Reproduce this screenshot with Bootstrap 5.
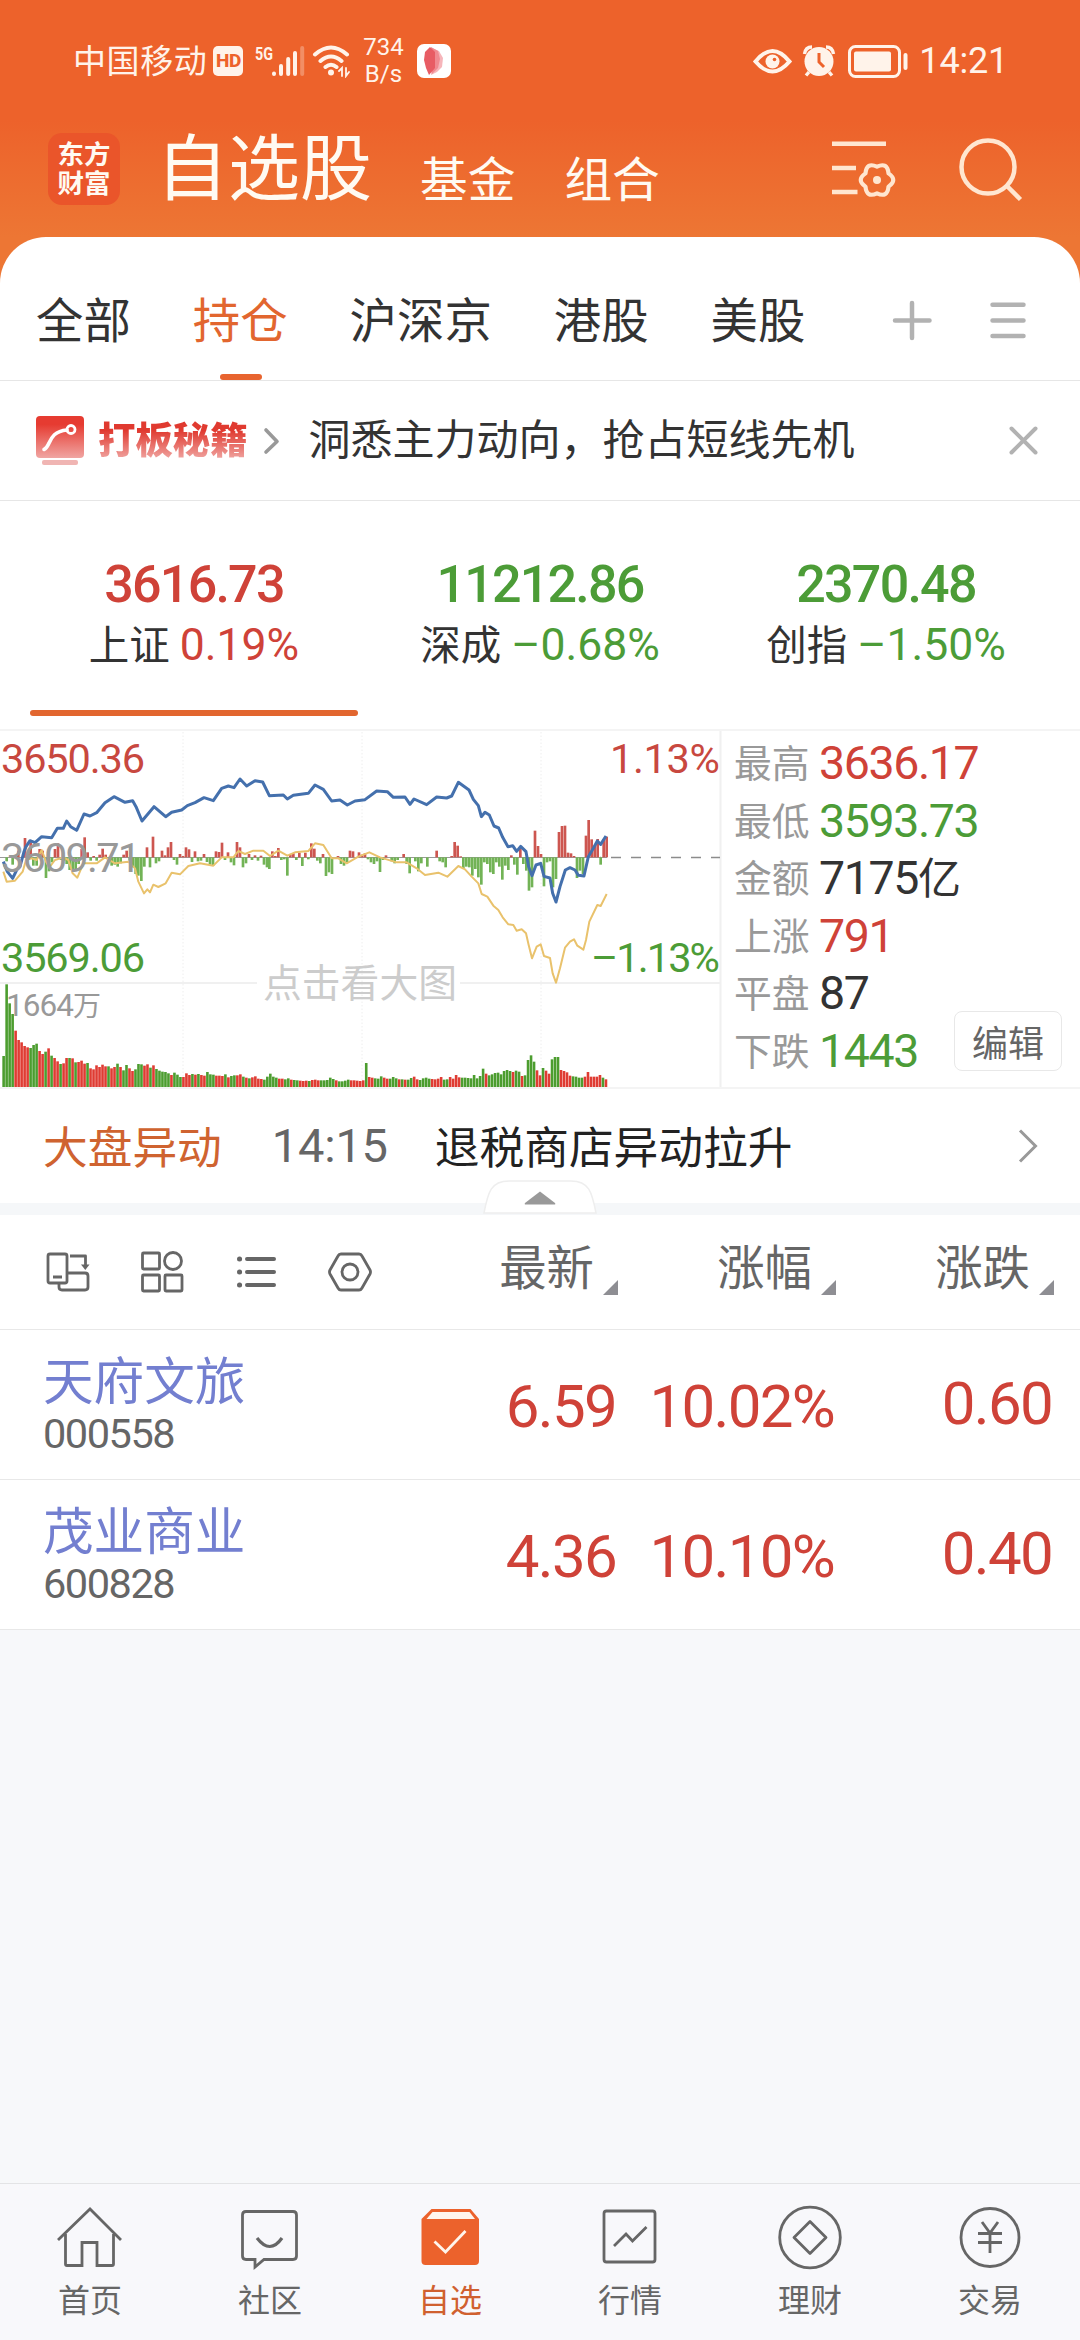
<!DOCTYPE html>
<html lang="zh-CN">
<head>
<meta charset="utf-8">
<meta name="viewport" content="width=device-width, initial-scale=1">
<title>自选股</title>
<link href="https://cdn.jsdelivr.net/npm/bootstrap@5.3.0/dist/css/bootstrap.min.css" rel="stylesheet">
<style>
  :root { --up:#cf4238; --down:#4c9c37; --brand:#e2662f; --ink:#333; --dim:#666; --line:#e6e6e6; }
  body { width:1080px; height:2340px; overflow:hidden; background:#f7f8fa; color:var(--ink);
         font-family:"Noto Sans CJK SC",sans-serif; line-height:1; }
  svg { display:block; flex:none; }
  .digits { font-family:Roboto,"Noto Sans CJK SC",sans-serif; letter-spacing:-.028em; }
  .up { color:var(--up); } .down { color:var(--down); }
  .app-top { background:linear-gradient(#ed622b 0,#ed622b 120px,#ed7634 237px,#ed7634 100%); }
  .status { height:122px; padding-left:73px; padding-right:72px; color:#fff3ea; font-size:33px; }
  .status .carrier { letter-spacing:.6px; margin-top:-4px; }
  .hd { width:30px; height:30px; border-radius:5px; background:#fff3ea; color:#ed622b; font:800 19px/30px Roboto,sans-serif; letter-spacing:-.5px; margin-left:6px; }
  .rate { font-size:24px; line-height:27px; width:44px; letter-spacing:0; }
  .time-now { font-size:36px; letter-spacing:-.2px; margin-left:9px; }
  .title-row { height:115px; padding-left:48px; padding-right:56px; color:#fffaf2; }
  .logo { width:72px; height:72px; border-radius:14px; background:#ea552a; font-weight:700; font-size:26.5px; line-height:29px; padding-top:5px; margin-top:-21px; }
  .t-main { font-size:72px; margin-left:36px; margin-top:-34px; }
  .t-sub { font-size:47.7px; margin-top:-6px; }
  .sheet { border-radius:46px 46px 0 0; }
  .tabs-row { height:144px; padding:0 54px 0 36px; border-bottom:1px solid var(--line); font-size:47.4px; }
  .tabs-row .tab-item { height:143px; line-height:161px; }
  .tabs-row .chosen { color:var(--brand); position:relative; }
  .tabs-row .chosen::after { content:""; position:absolute; left:27px; bottom:0; width:42px; height:6px; border-radius:3px; background:#e8642f; }
  .promo { height:120px; padding:0 42px 0 36px; border-bottom:1px solid var(--line); }
  .promo-name { font-weight:900; font-size:37.4px; line-height:50px; background:linear-gradient(#e03a30 35%,#efa09c 90%); -webkit-background-clip:text; background-clip:text; color:transparent; }
  .promo-text { font-size:42px; }
  .indices { height:228px; padding:56px 21px 0; }
  .idx-num { font-size:52px; font-weight:500; line-height:56px; letter-spacing:-.034em; }
  .idx-sub { font-size:40.5px; line-height:62px; margin-top:-1px; }
  .idx-sub .digits { font-size:44.5px; letter-spacing:0; margin-left:10px; }
  .idx-bar { height:6px; width:328px; border-radius:3px; background:#e2662f; margin:34px 0 0 9px; }
  .market { height:360px; border-top:2px solid #f4f4f4; border-bottom:2px solid #f4f4f4; }
  .stats { width:358px; padding:4px 0 0 12px; }
  .stats .stat { height:57.5px; line-height:57.5px; }
  .stat-k { color:#999; font-size:37.8px; width:85px; margin-top:-3px; }
  .stat-v { font-size:46.5px; letter-spacing:-.03em; }
  .stat-v .yi { font-size:43px; }
  .edit { right:18px; bottom:16px; width:108px; height:60px; border:1px solid #e8e8e8; border-radius:8px; color:var(--dim); font-size:36px; line-height:51px; padding:0; background:#fff; }
  .alert-row { height:114px; padding:0 42px 0 43px; font-size:44.7px; }
  .alert-row > span { margin-top:-2px; }
  .clock { color:var(--dim); font-size:47px; letter-spacing:-.2px; }
  .band { height:12px; background:#f5f7f9; position:relative; }
  .handle { position:absolute; left:483px; top:-23px; }
  .cols { height:115px; padding-left:46px; border-bottom:1px solid #e8e8e8; }
  .cell-b, .cell-c { width:218px; }
  .col-head { font-size:47.4px; color:var(--dim); margin-top:-8px; }
  .col-head::after { content:""; display:inline-block; width:15px; height:15px; margin-left:9px; vertical-align:-10px; background:#8e8e93; clip-path:polygon(100% 0,100% 100%,0 100%); }
  .stock { height:150px; border-bottom:1px solid #e8e8e8; padding-left:43px; }
  .stock-name { color:#737fd0; font-size:50.6px; line-height:58px; margin-top:19px; }
  .stock-code { color:var(--dim); font-size:41.5px; line-height:44px; margin-top:5px; letter-spacing:-.035em; }
  .quote { font-size:60px; line-height:153px; }
  .dock { height:157px; border-top:1px solid #e3e4e6; background:#f8f8fb; font-size:32px; color:var(--dim); }
  .dock .dock-item { width:180px; padding-top:19px; }
  .dock .dock-item span { margin-top:5px; line-height:40px; }
  .dock .live { color:#d0602f; }
</style>
<script src="https://cdn.jsdelivr.net/npm/bootstrap@5.3.0/dist/js/bootstrap.bundle.min.js"></script>
</head>
<body class="d-flex flex-column">
<header class="app-top">
  <div class="status d-flex align-items-center">
    <span class="carrier">中国移动</span>
    <span class="hd text-center">HD</span>
    <svg class="ms-2" width="56" height="46" viewBox="250 38 56 46"><text x="254" y="60" font-family="Roboto" font-weight="700" font-size="19" textLength="18" lengthAdjust="spacingAndGlyphs" fill="#fff3ea">5G</text><g stroke="#fff3ea" stroke-width="4" stroke-linecap="round"><path d="M273 73.500v.5M280 66v8M287.200 59v15M294 53v21"/><path d="M301.200 48v26" opacity=".3"/></g></svg>
    <svg style="margin-left:5px" width="40" height="34" viewBox="312 44 40 34" fill="none" stroke="#fff3ea" stroke-width="4" stroke-linecap="round"><path d="M315 54.500q16-14 32 0M320.500 61q10.500-9 21 0M325.500 67q5.500-4.500 11 0"/><circle cx="331" cy="72.500" r="3" fill="#fff3ea" stroke="none"/><path d="M339 71l3-3v8M349 72l-3 4v-8" stroke-width="1.800"/></svg>
    <span class="rate digits text-center" style="margin-left:9px">734 B/s</span>
    <svg style="margin-left:12px" width="34" height="34" viewBox="0 0 34 34"><rect width="34" height="34" rx="7" fill="#fff"/><path d="M15 4l7 3 4 7-1 9-5 5-6 3z" fill="#f6b5ba"/><path d="M14 3l7 4 2 8-2 9-6 6z" fill="#f08a91"/><path d="M13 3l5 5v16l-6 7-3-7-2-8 1-8z" fill="#e85c64"/></svg>
    <svg class="ms-auto" width="158" height="36" viewBox="753 43 158 36" fill="none" stroke="#fff3ea"><path d="M756.500 61.500q17-21 34 0q-17 20-34 0z" stroke-width="4"/><circle cx="773.500" cy="61.500" r="7" fill="#fff3ea" stroke="none"/><circle cx="775.500" cy="59.500" r="1.800" fill="#ed622b" stroke="none"/><circle cx="820" cy="61.500" r="14.500" fill="#fff3ea" stroke="none"/><path d="M805.500 54q1-7 7.500-7M834.500 54q-1-7-7.500-7M810 72l-3 3.500M830 72l3 3.500" stroke-width="3.400"/><path d="M820 53v9l5 5" stroke="#ed622b" stroke-width="3"/><rect x="850.500" y="46.500" width="50" height="30" rx="6" stroke-width="3"/><rect x="855" y="51.500" width="37" height="20" rx="2" fill="#fff3ea" stroke="none"/><rect x="904.500" y="53" width="4" height="17" rx="2" fill="#fff3ea" stroke="none"/></svg>
    <span class="digits time-now">14:21</span>
  </div>
  <div class="title-row d-flex align-items-center">
    <div class="logo text-center">东方<br>财富</div>
    <span class="t-main">自选股</span>
    <span class="t-sub" style="margin-left:48px">基金</span>
    <span class="t-sub" style="margin-left:49px">组合</span>
    <svg class="ms-auto" style="margin-top:-21px" width="66" height="60" viewBox="830 140 66 60" fill="none" stroke="#ffe6d0"><path d="M831 144.800h54M831 169h24M831 193h25.500" stroke-width="4.600"/><path d="M887.500 174.400Q886.500 162.800 876 167.700Q865.500 162.800 864.500 174.400Q855 181 864.500 187.600Q865.500 199.200 876 194.300Q886.500 199.200 887.500 187.600Q897 181 887.500 174.400z" stroke-width="4.200" stroke-linejoin="round"/><circle cx="876" cy="181" r="4" fill="#ffe6d0" stroke="none"/></svg>
    <svg style="margin:-21px 0 0 61px" width="66" height="66" viewBox="957 135 66 66" fill="none" stroke="#ffe6d0" stroke-width="4.500"><circle cx="987" cy="166" r="26.500"/><path d="M1006 185l13.500 13.500"/></svg>
  </div>
  <nav class="sheet bg-white">
    <div class="tabs-row d-flex">
      <div class="d-flex" style="gap:62px">
        <span class="tab-item">全部</span><span class="tab-item chosen">持仓</span><span class="tab-item">沪深京</span><span class="tab-item">港股</span><span class="tab-item">美股</span>
      </div>
      <svg class="ms-auto" style="margin-top:61px" width="134" height="44" viewBox="892 298 134 44" stroke="#b2b2b2" stroke-width="4.500" stroke-linecap="round"><path d="M895 320.500h34.500M912 303v35M992.500 304.800h31M992.500 320.500h31M992.500 336h31"/></svg>
    </div>
  </nav>
</header>

<main class="bg-white">
  <section class="promo d-flex align-items-center">
    <svg width="48" height="50" viewBox="0 0 48 50"><defs><linearGradient id="redfade" x2="0" y2="1"><stop offset=".2" stop-color="#e63b31"/><stop offset="1" stop-color="#f0a5a2"/></linearGradient></defs><rect width="48" height="42" rx="4" fill="url(#redfade)"/><rect x="6" y="44" width="36" height="5" rx="2" fill="#f0b5b3"/><path d="M8 33.500c7-3 4-18 23-19.500" fill="none" stroke="#fff" stroke-width="3.600" stroke-linecap="round"/><circle cx="35" cy="13.500" r="4" fill="none" stroke="#fff" stroke-width="2.800"/></svg>
    <span class="promo-name" style="margin:-5px 0 0 14px">打板秘籍</span>
    <svg style="margin-left:15px" width="17" height="28" viewBox="0 0 17 28" fill="none" stroke="#999" stroke-width="3.600" stroke-linecap="round" stroke-linejoin="round"><path d="M3 3l11 11.500L3 25"/></svg>
    <span class="promo-text" style="margin:-7px 0 0 29px">洞悉主力动向，抢占短线先机</span>
    <svg class="ms-auto" width="29" height="29" viewBox="0 0 29 29" stroke="#b2b2b2" stroke-width="4" stroke-linecap="round"><path d="M2.500 2.500l24 24M26.500 2.500l-24 24"/></svg>
  </section>

  <section class="indices">
    <div class="row g-0 text-center">
      <div class="col"><div class="idx-num digits up">3616.73</div><div class="idx-sub">上证<span class="digits up">0.19%</span></div><div class="idx-bar"></div></div>
      <div class="col"><div class="idx-num digits down">11212.86</div><div class="idx-sub">深成<span class="digits down">–0.68%</span></div></div>
      <div class="col"><div class="idx-num digits down">2370.48</div><div class="idx-sub">创指<span class="digits down">–1.50%</span></div></div>
    </div>
  </section>

  <section class="market d-flex position-relative">
    <svg id="chart" width="722" height="356" viewBox="0 731 722 356">
      <path d="M183 732v355M362 732v355M541 732v355" stroke="#eee" stroke-dasharray="1.500 2"/>
      <path d="M0 983h257M460 983h260M720.500 731v357" stroke="#f0f0f0" stroke-width="2"/>
      <path d="M0 857.500h607" stroke="#999" stroke-width="1"/>
      <path d="M600 857.500h120" stroke="#8c8c8c" stroke-width="1.600" stroke-dasharray="10 10" stroke-dashoffset="-11"/>
      <g transform="translate(0 720) scale(.333333)">
        <g id="ticks"></g>
        <g id="volume"></g>
        <polyline fill="none" stroke="#e9c26c" stroke-width="6" stroke-linejoin="round" points="10,455 20,485 45,482 68,455 78,420 95,415 110,420 125,390 138,425 148,442 165,420 190,412 205,420 218,460 232,473 250,430 290,430 315,412 345,430 385,425 405,445 415,485 432,520 442,508 450,517 460,494 475,501 497,490 515,458 540,463 565,438 600,430 640,437 665,412 700,412 715,393 735,402 760,392 790,392 810,408 835,392 862,407 885,397 925,393 945,370 970,375 995,415 1015,415 1040,430 1075,410 1108,397 1140,412 1190,427 1220,427 1250,445 1275,465 1315,458 1342,470 1375,438 1395,448 1415,470 1435,490 1445,522 1462,530 1480,557 1495,570 1508,592 1525,613 1540,615 1550,632 1565,628 1578,640 1586,675 1596,715 1610,680 1622,673 1632,708 1650,714 1658,760 1668,788 1680,745 1695,683 1710,665 1722,658 1732,677 1750,689 1758,660 1768,605 1792,555 1802,558 1820,522"/>
        <polyline fill="none" stroke="#4470ad" stroke-width="9" stroke-linejoin="round" points="10,425 22,455 38,475 50,450 60,440 72,395 78,380 90,362 105,368 125,350 155,353 172,325 190,325 200,303 212,320 230,331 252,282 270,288 290,278 315,248 342,230 375,247 398,242 408,260 426,303 462,260 497,290 515,277 545,270 562,257 585,248 612,233 640,242 665,205 685,198 702,203 720,177 740,198 765,182 788,186 808,227 850,225 862,237 880,226 925,220 945,195 970,208 995,243 1020,240 1042,255 1065,243 1095,239 1130,213 1162,215 1180,232 1215,231 1230,253 1242,237 1280,254 1310,231 1340,234 1355,228 1375,187 1407,210 1420,238 1435,257 1444,290 1455,277 1468,285 1482,318 1496,324 1508,352 1524,380 1538,377 1550,394 1562,379 1578,395 1586,440 1596,467 1608,435 1622,430 1632,469 1650,474 1658,520 1668,546 1680,500 1696,450 1710,443 1725,450 1735,466 1752,468 1765,410 1780,385 1792,363 1802,373 1818,348"/>
      </g>
      <g font-family="Roboto,'Noto Sans CJK SC',sans-serif" font-size="41.500">
        <text x="1" y="772.500" textLength="144" fill="#c8483f">3650.36</text>
        <text x="1" y="871.500" textLength="140" fill="#999">3609.71</text>
        <text x="1" y="971.500" textLength="144" fill="#4c9c37">3569.06</text>
        <text x="610" y="772.500" textLength="110" fill="#c8483f">1.13%</text>
        <text x="591" y="971.500" textLength="129" fill="#4c9c37">–1.13%</text>
        <text x="6" y="1015.500" font-size="31.500" textLength="95" fill="#999">1664<tspan font-size="28">万</tspan></text>
      </g>
      <text x="263" y="996.500" font-family="'Noto Sans CJK SC',sans-serif" font-size="38.800" fill="#ccc">点击看大图</text>
    </svg>
    <div class="stats">
      <div class="stat d-flex"><span class="stat-k">最高</span><span class="stat-v digits up">3636.17</span></div>
      <div class="stat d-flex"><span class="stat-k">最低</span><span class="stat-v digits down">3593.73</span></div>
      <div class="stat d-flex"><span class="stat-k">金额</span><span class="stat-v digits">7175<span class="yi">亿</span></span></div>
      <div class="stat d-flex"><span class="stat-k">上涨</span><span class="stat-v digits up">791</span></div>
      <div class="stat d-flex"><span class="stat-k">平盘</span><span class="stat-v digits">87</span></div>
      <div class="stat d-flex"><span class="stat-k">下跌</span><span class="stat-v digits down">1443</span></div>
    </div>
    <button class="edit btn position-absolute">编辑</button>
  </section>

  <section class="alert-row d-flex align-items-center">
    <span style="color:#cf6330">大盘异动</span>
    <span class="clock digits" style="margin-left:50px">14:15</span>
    <span style="margin-left:47px;color:#222">退税商店异动拉升</span>
    <svg class="ms-auto" width="20" height="34" viewBox="0 0 20 34" fill="none" stroke="#999" stroke-width="3"><path d="M2 1.500L17.500 17 2 32.500"/></svg>
  </section>
  <div class="band"><svg class="handle" width="114" height="34" viewBox="0 0 114 34"><path d="M1 33C5 12 8 1 26 1H88C106 1 109 12 113 33z" fill="#fff" stroke="#eee" stroke-width="1.500"/><path d="M57 11.500L72 23q1 1.500-1 1.500H43q-2 0-1-1.500z" fill="#999"/></svg></div>

  <section class="cols d-flex align-items-center">
    <div class="d-flex align-items-center" style="width:325px">
      <svg width="326" height="44" viewBox="46 1250 326 44" fill="none" stroke="#666" stroke-width="2.800" stroke-linejoin="round"><rect x="48" y="1254" width="19" height="29" rx="2"/><path d="M53 1277h9M67 1273h18q3 0 3 3v11q0 3-3 3H62q-3 0-3-3v-4M70 1256h15.500v10"/><path d="M81 1264.500h8.500l-4.200 5.500z" fill="#666" stroke="none"/><rect x="142.500" y="1253" width="17" height="16" rx="1"/><circle cx="173" cy="1261" r="8.500"/><rect x="142.500" y="1275" width="17" height="16" rx="1"/><rect x="165" y="1275" width="17" height="16" rx="1"/><path d="M247 1259h27M247 1272h27M247 1285h27" stroke-width="4" stroke-linecap="round"/><path d="M239.500 1259h.1M239.500 1272h.1M239.500 1285h.1" stroke-width="5" stroke-linecap="round"/><path d="M341 1254h18q2 0 3 2l8 14q1 2 0 4l-8 14q-1 2-3 2h-18q-2 0-3-2l-8-14q-1-2 0-4l8-14q1-2 3-2z"/><circle cx="350" cy="1272" r="8"/></svg>
    </div>
    <div class="col-head text-end" style="width:247px">最新</div><div class="col-head text-end cell-b">涨幅</div><div class="col-head text-end cell-c">涨跌</div>
  </section>
  <section class="stock d-flex">
    <div style="width:357px"><div class="stock-name">天府文旅</div><div class="stock-code digits">000558</div></div>
    <div class="quote digits up text-end" style="width:216px">6.59</div><div class="quote digits up text-end cell-b">10.02%</div><div class="quote digits up text-end cell-c" style="margin-top:-3px">0.60</div>
  </section>
  <section class="stock d-flex">
    <div style="width:357px"><div class="stock-name">茂业商业</div><div class="stock-code digits">600828</div></div>
    <div class="quote digits up text-end" style="width:216px">4.36</div><div class="quote digits up text-end cell-b">10.10%</div><div class="quote digits up text-end cell-c" style="margin-top:-3px">0.40</div>
  </section>
</main>

<footer class="dock d-flex mt-auto">
  <div class="dock-item d-flex flex-column align-items-center"><svg width="68" height="70" viewBox="56 2203 68 70" fill="none" stroke="#666" stroke-width="2.800"><path d="M58 2240l32-31 31 31M65.500 2234v30q0 1.500 1.500 1.500h15v-23h15v23h15q1.500 0 1.500-1.500v-30"/></svg><span>首页</span></div>
  <div class="dock-item d-flex flex-column align-items-center"><svg width="68" height="70" viewBox="236 2203 68 70" fill="none" stroke="#666" stroke-width="2.800"><path d="M246 2211.500h47q3.500 0 3.500 3.500v41q0 3.500-3.500 3.500h-29l-9 7.500v-7.500h-9q-3.500 0-3.500-3.500v-41q0-3.500 3.500-3.500z"/><path d="M257 2238q13 17 25 0" stroke-width="3.200"/></svg><span>社区</span></div>
  <div class="dock-item live d-flex flex-column align-items-center"><svg width="68" height="70" viewBox="415.500 2203 68 70" fill="none"><path d="M431 2209h39l8.500 10v42q0 4-4 4H425q-4 0-4-4v-42z" fill="#ec622c"/><path d="M432 2212h37l5.500 7H426z" fill="#fff5ec"/><path d="M434 2241.500l11 10.500 20-21" stroke="#fff5ec" stroke-width="2.800"/></svg><span>自选</span></div>
  <div class="dock-item d-flex flex-column align-items-center"><svg width="68" height="70" viewBox="596 2203 68 70" fill="none" stroke="#666" stroke-width="2.800"><rect x="604" y="2211" width="51" height="51" rx="2.500"/><path d="M614 2246l12-12 6.500 7 14-14"/></svg><span>行情</span></div>
  <div class="dock-item d-flex flex-column align-items-center"><svg width="68" height="70" viewBox="775.500 2203 68 70" fill="none" stroke="#666" stroke-width="2.800" stroke-linejoin="round"><circle cx="809.500" cy="2237.500" r="30.300"/><path d="M809.500 2221.500l16 16-16 16-16-16z"/></svg><span>理财</span></div>
  <div class="dock-item d-flex flex-column align-items-center"><svg width="68" height="70" viewBox="955 2203 68 70" fill="none" stroke="#666" stroke-width="2.800"><circle cx="989" cy="2237.500" r="29"/><path d="M981 2222l8 11 8-11M977 2233.500h24M977 2242.500h24M989 2233v20"/></svg><span>交易</span></div>
</footer>
<script>
  // Per-minute volume for the morning and afternoon sessions, with a parallel colour string for each.
  const volA = [95,310,253,221,171,143,136,125,121,119,128,132,110,101,108,118,96,89,79,71,73,89,89,88,76,77,81,72,74,58,55,67,62,69,64,64,58,62,72,62,52,68,58,50,55,71,70,66,70,60,67,56,51,48,47,43,38,45,39,32,32,43,38,41,39,41,38,36,47,40,39,36,36,35,40,31,35,37,37,40,33,30,28,31,34,27,26,24,33,42,33,30,27,27,25,28,24,23,22,21,20,21,20,23,24,22];
  const volB = [22,22,23,30,26,22,19,19,21,24,22,22,21,20,22,74,32,30,28,27,34,30,27,27,32,28,25,25,24,24,29,33,25,23,28,30,27,26,25,27,32,24,25,32,27,38,31,30,30,29,28,38,28,35,57,42,37,40,44,45,40,50,53,50,47,51,48,35,37,83,97,78,52,37,59,51,42,85,92,92,53,50,46,36,34,33,30,30,33,47,33,33,33,38,30,25];
  const toneA = "ggggrrrrrgggrrgrgrrgrrgrgrrrgrrrrrrgrrgrggrrgggrrgrgggggrgggrrrgrgrrgggrrrgrggrrgrgrrrrgggggrrggrggrrrgrrr";
  const toneB = "gggggrggggrrrrrgrrgggrrgggrgrggrrggggrrrrggrrrrggggggggrggggggggrggrggggrrgrrgggrrrrggggrrrrrrgrr";
  const bar = (x, y, w, h, c) => `<rect x="${x}" y="${y}" width="${w}" height="${h}" fill="${c}"/>`;
  const session = (vol, tone, from) => vol.map((h, i) =>
    bar(7 + (from + i) * 8.99, 1103 - h, 7.8, h, tone[i] === "g" ? "#4c9d2f" : "#df3c33")).join("");
  document.getElementById("volume").innerHTML = session(volA, toneA, 0) + session(volB, toneB, volA.length);

  // Net momentum around the previous close: [x, height]; positive rises above the axis.
  const left = [20,-12,38,-22,55,20,75,58,84,10,92,45,100,-25,110,-25,119,25,128,20,138,-62,147,-42,156,-15,165,25,174,42,183,-8,192,-10,200,-20,209,-38,218,-35,227,-35,236,-20,245,25,254,60,263,15,272,-10,281,4,290,-10,299,8,308,26,317,8,326,-15,335,-25,344,-22,353,-28,362,-18,371,8,380,20,389,-10,398,-30,407,-50,415,-55,424,-71,433,-28,441,30,450,-30,459,62,468,-18,477,-12,486,20,495,6,504,30,513,46,522,-8,531,-22,540,10,549,4,558,30,567,24,576,-14,585,18,594,-12,603,-10,612,10,621,-14,630,-22,639,-25,648,18,657,16,666,44,675,-8,684,15,693,-15,702,-24,711,46,720,30,729,-30,738,-18,747,10,756,-8,765,6,774,-10,783,5,792,-22,801,-30,808,-35,817,18,826,4,835,28,844,-8,853,-6,862,-55,871,8,880,12,889,-8,898,14,907,-26,916,14,925,-6,934,42,943,26];
  const right = [22,-10,31,-18,39,10,48,-56,57,-45,66,-50,84,4,93,-20,102,-25,111,-15,120,20,129,18,147,15,156,8,165,12,174,-6,183,-15,192,-20,201,-12,210,-44,219,-8,228,6,245,-12,254,-18,263,-8,281,10,290,-20,299,-48,316,-12,325,-42,334,-18,352,-28,380,20,389,-12,398,-15,407,-30,425,4,434,46,443,35,452,3,460,-35,469,-28,478,-30,487,-55,496,-35,505,-60,514,-82,523,-15,532,-20,541,-45,550,-50,559,-15,568,-28,577,-67,586,-25,595,-38,604,6,613,-22,622,-52,631,25,640,-20,649,-40,657,-100,666,-90,675,80,684,34,693,10,702,-87,711,-15,720,-12,729,-90,738,-65,747,76,756,94,765,95,774,14,783,12,792,4,801,-62,810,-40,819,-50,828,65,836,112,845,54,854,35,863,55,872,-22,881,55,890,62];
  const draw = (a, off) => { let s = ""; for (let i = 0; i < a.length; i += 2) { const h = a[i + 1];
    s += bar(a[i] + off - 4, h > 0 ? 412 - h : 412, 8, Math.abs(h), h > 0 ? "#cd5650" : "#72b356"); } return s; };
  document.getElementById("ticks").innerHTML = draw(left, 0) + draw(right, 930);
</script>
</body>
</html>
